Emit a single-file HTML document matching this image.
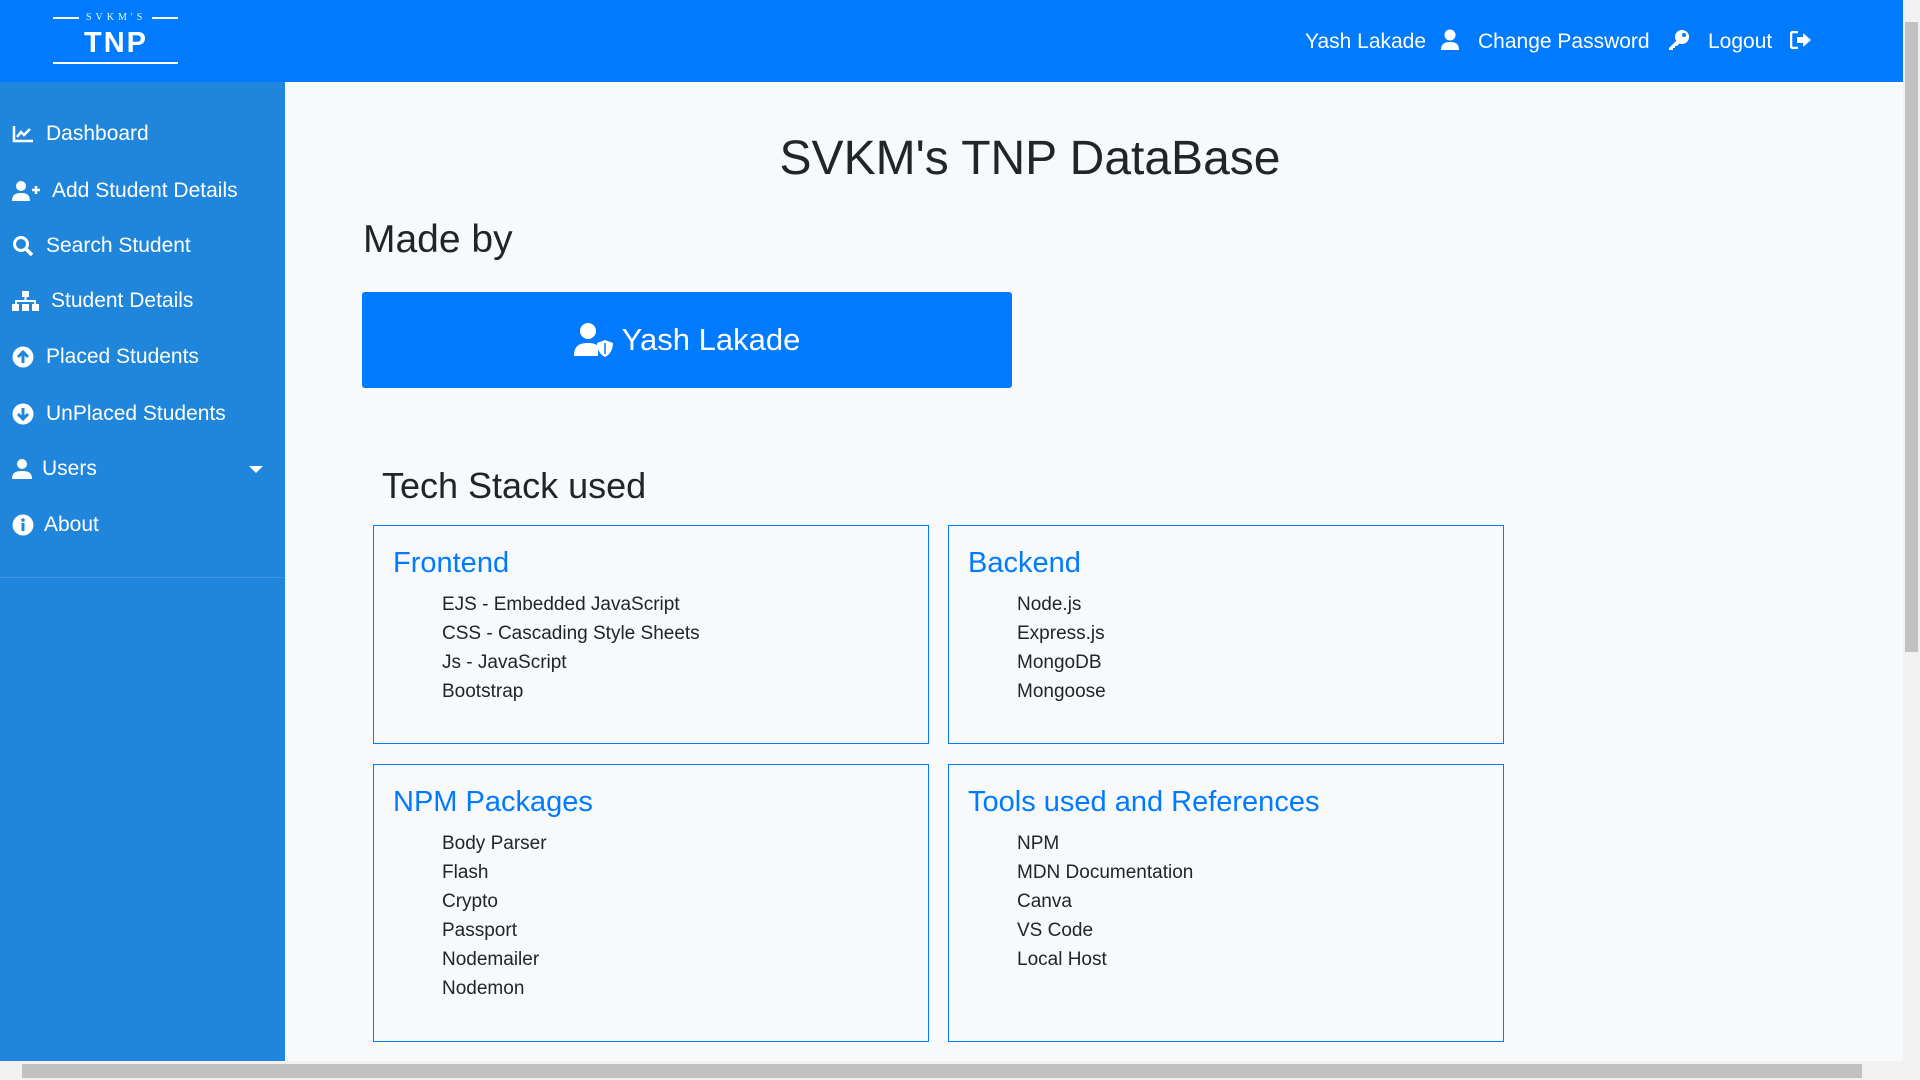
<!DOCTYPE html>
<html><head><meta charset="utf-8"><style>
*{margin:0;padding:0;box-sizing:border-box}
body{width:1920px;height:1080px;overflow:hidden;background:#f8f9fa;font-family:"Liberation Sans",Arial,sans-serif;position:relative;color:#212529}
.hdr{position:absolute;left:0;top:0;width:1903px;height:82px;background:#007bff}
.side{position:absolute;left:0;top:82px;width:285px;height:979px;background:#1f86dc}
.sep{position:absolute;left:0;top:577px;width:285px;height:1px;background:#3a94e0}
.nav{position:absolute;left:12px;color:#fff;font-size:21px;display:flex;align-items:center;height:30px}
.nav svg{margin-right:12px}
.top{position:absolute;top:28px;color:#fff;font-size:21px;line-height:28px}
.vs{position:absolute;right:0;top:0;width:17px;height:1061px;background:#f1f1f1}
.vs .th{position:absolute;left:2px;top:22px;width:13px;height:630px;background:#c1c1c1}
.hs{position:absolute;left:0;top:1061px;width:1920px;height:19px;background:#f1f1f1}
.hs .th{position:absolute;left:22px;top:3px;width:1840px;height:14px;background:#c1c1c1}
.card{position:absolute;border:1px solid #007bff;background:#f8f9fa}
.card h3{position:absolute;left:19px;top:21px;font-size:29px;font-weight:normal;color:#007bff}
.card ul{position:absolute;left:68px;top:64px;list-style:none;font-size:19px;line-height:29px}
</style></head><body>
<div class="hdr">
 <div style="position:absolute;left:53px;top:17px;width:26px;height:2px;background:#fff"></div>
 <div style="position:absolute;left:152px;top:17px;width:26px;height:2px;background:#fff"></div>
 <div style="position:absolute;left:86px;top:12px;font-family:'Liberation Serif',serif;font-size:10px;letter-spacing:4px;color:#dfe">SVKM'S</div>
 <div style="position:absolute;left:84px;top:27px;font-size:29px;font-weight:bold;color:#fff;letter-spacing:2px">TNP</div>
 <div style="position:absolute;left:53px;top:62px;width:125px;height:2px;background:#fff"></div>
 <div class="top" style="left:1305px">Yash Lakade</div>
 <svg style="position:absolute;left:1440px;top:29px" width="20" height="22" viewBox="0 0 20 22"><circle cx="10" cy="6" r="5.5" fill="#fff"/><path d="M1 21c0-6 3-8 9-8s9 2 9 8z" fill="#fff"/></svg>
 <div class="top" style="left:1478px">Change Password</div>
 <svg style="position:absolute;left:1668px;top:29px" width="22" height="22" viewBox="0 0 22 22"><circle cx="14" cy="8" r="7" fill="#fff"/><path d="M9 11l-8 8v2h4v-2h2v-2h2l3-3z" fill="#fff"/><circle cx="16" cy="6" r="2" fill="#007bff"/></svg>
 <div class="top" style="left:1708px">Logout</div>
 <svg style="position:absolute;left:1790px;top:31px" width="22" height="18" viewBox="0 0 22 18"><path d="M8 1H3a2 2 0 0 0-2 2v12a2 2 0 0 0 2 2h5" stroke="#fff" stroke-width="2.5" fill="none"/><path d="M7 6h6V2l8 7-8 7v-4H7z" fill="#fff"/></svg>
</div>
<div class="side">
 <div class="sep" style="top:495px"></div>
</div>
<div class="nav" style="top:119px"><svg width="22" height="18" viewBox="0 0 22 18"><path d="M2 1v15h19" stroke="#fff" stroke-width="2.5" fill="none"/><path d="M5 12l4-5 3 3 6-6" stroke="#fff" stroke-width="2.5" fill="none"/></svg>Dashboard</div>
<div class="nav" style="top:176px"><svg width="28" height="20" viewBox="0 0 28 20"><circle cx="9" cy="5" r="5" fill="#fff"/><path d="M0 20c0-6 3-8 9-8s9 2 9 8z" fill="#fff"/><path d="M20 9h8M24 5v8" stroke="#fff" stroke-width="2.5"/></svg>Add Student Details</div>
<div class="nav" style="top:231px"><svg width="22" height="22" viewBox="0 0 22 22"><circle cx="9" cy="9" r="6.5" stroke="#fff" stroke-width="3" fill="none"/><path d="M14 14l6 6" stroke="#fff" stroke-width="3.5"/></svg>Search Student</div>
<div class="nav" style="top:286px"><svg width="27" height="22" viewBox="0 0 27 22"><rect x="10" y="1" width="7" height="6" fill="#fff"/><path d="M13.5 7v4M4 14v-3h19v3" stroke="#fff" stroke-width="2" fill="none"/><rect x="0" y="14" width="7" height="7" fill="#fff"/><rect x="10" y="14" width="7" height="7" fill="#fff"/><rect x="20" y="14" width="7" height="7" fill="#fff"/></svg>Student Details</div>
<div class="nav" style="top:342px"><svg width="22" height="22" viewBox="0 0 22 22"><circle cx="11" cy="11" r="10.5" fill="#fff"/><path d="M11 17V6M6 11l5-5 5 5" stroke="#1f86dc" stroke-width="3" fill="none"/></svg>Placed Students</div>
<div class="nav" style="top:399px"><svg width="22" height="22" viewBox="0 0 22 22"><circle cx="11" cy="11" r="10.5" fill="#fff"/><path d="M11 5v11M6 11l5 5 5-5" stroke="#1f86dc" stroke-width="3" fill="none"/></svg>UnPlaced Students</div>
<div class="nav" style="top:454px"><svg width="20" height="20" viewBox="0 0 20 20" style="margin-right:10px"><circle cx="10" cy="5" r="5" fill="#fff"/><path d="M0 20c0-6 3-8 10-8s10 2 10 8z" fill="#fff"/></svg>Users</div>
<div style="position:absolute;left:249px;top:466px;border-left:7px solid transparent;border-right:7px solid transparent;border-top:7px solid #fff"></div>
<div class="nav" style="top:510px"><svg width="22" height="22" viewBox="0 0 22 22" style="margin-right:10px"><circle cx="11" cy="11" r="10.5" fill="#fff"/><rect x="9.5" y="9" width="3" height="8" fill="#1f86dc"/><circle cx="11" cy="6" r="1.8" fill="#1f86dc"/></svg>About</div>

<div style="position:absolute;left:285px;width:1490px;top:131px;text-align:center;font-size:48px">SVKM's TNP DataBase</div>
<div style="position:absolute;left:363px;top:218px;font-size:39px">Made by</div>
<div style="position:absolute;left:362px;top:292px;width:650px;height:96px;background:#007bff;border-radius:3px;color:#fff;font-size:31px;display:flex;align-items:center;justify-content:center">
 <svg width="40" height="34" viewBox="0 0 40 34" style="margin-right:8px"><circle cx="14" cy="8" r="8" fill="#fff"/><path d="M0 33c0-10 5-13 14-13 5 0 8 1 10 3v10z" fill="#fff"/><path d="M31 17l8 3c0 8-4 12-8 14-4-2-8-6-8-14z" fill="#fff"/><path d="M31 20v11" stroke="#007bff" stroke-width="1.5"/></svg>Yash Lakade</div>
<div style="position:absolute;left:382px;top:465px;font-size:36px">Tech Stack used</div>

<div class="card" style="left:373px;top:525px;width:556px;height:219px"><h3>Frontend</h3><ul><li>EJS - Embedded JavaScript</li><li>CSS - Cascading Style Sheets</li><li>Js - JavaScript</li><li>Bootstrap</li></ul></div>
<div class="card" style="left:948px;top:525px;width:556px;height:219px"><h3>Backend</h3><ul><li>Node.js</li><li>Express.js</li><li>MongoDB</li><li>Mongoose</li></ul></div>
<div class="card" style="left:373px;top:764px;width:556px;height:278px"><h3>NPM Packages</h3><ul><li>Body Parser</li><li>Flash</li><li>Crypto</li><li>Passport</li><li>Nodemailer</li><li>Nodemon</li></ul></div>
<div class="card" style="left:948px;top:764px;width:556px;height:278px"><h3>Tools used and References</h3><ul><li>NPM</li><li>MDN Documentation</li><li>Canva</li><li>VS Code</li><li>Local Host</li></ul></div>

<div class="vs"><div class="th"></div></div>
<div class="hs"><div class="th"></div></div>
</body></html>
